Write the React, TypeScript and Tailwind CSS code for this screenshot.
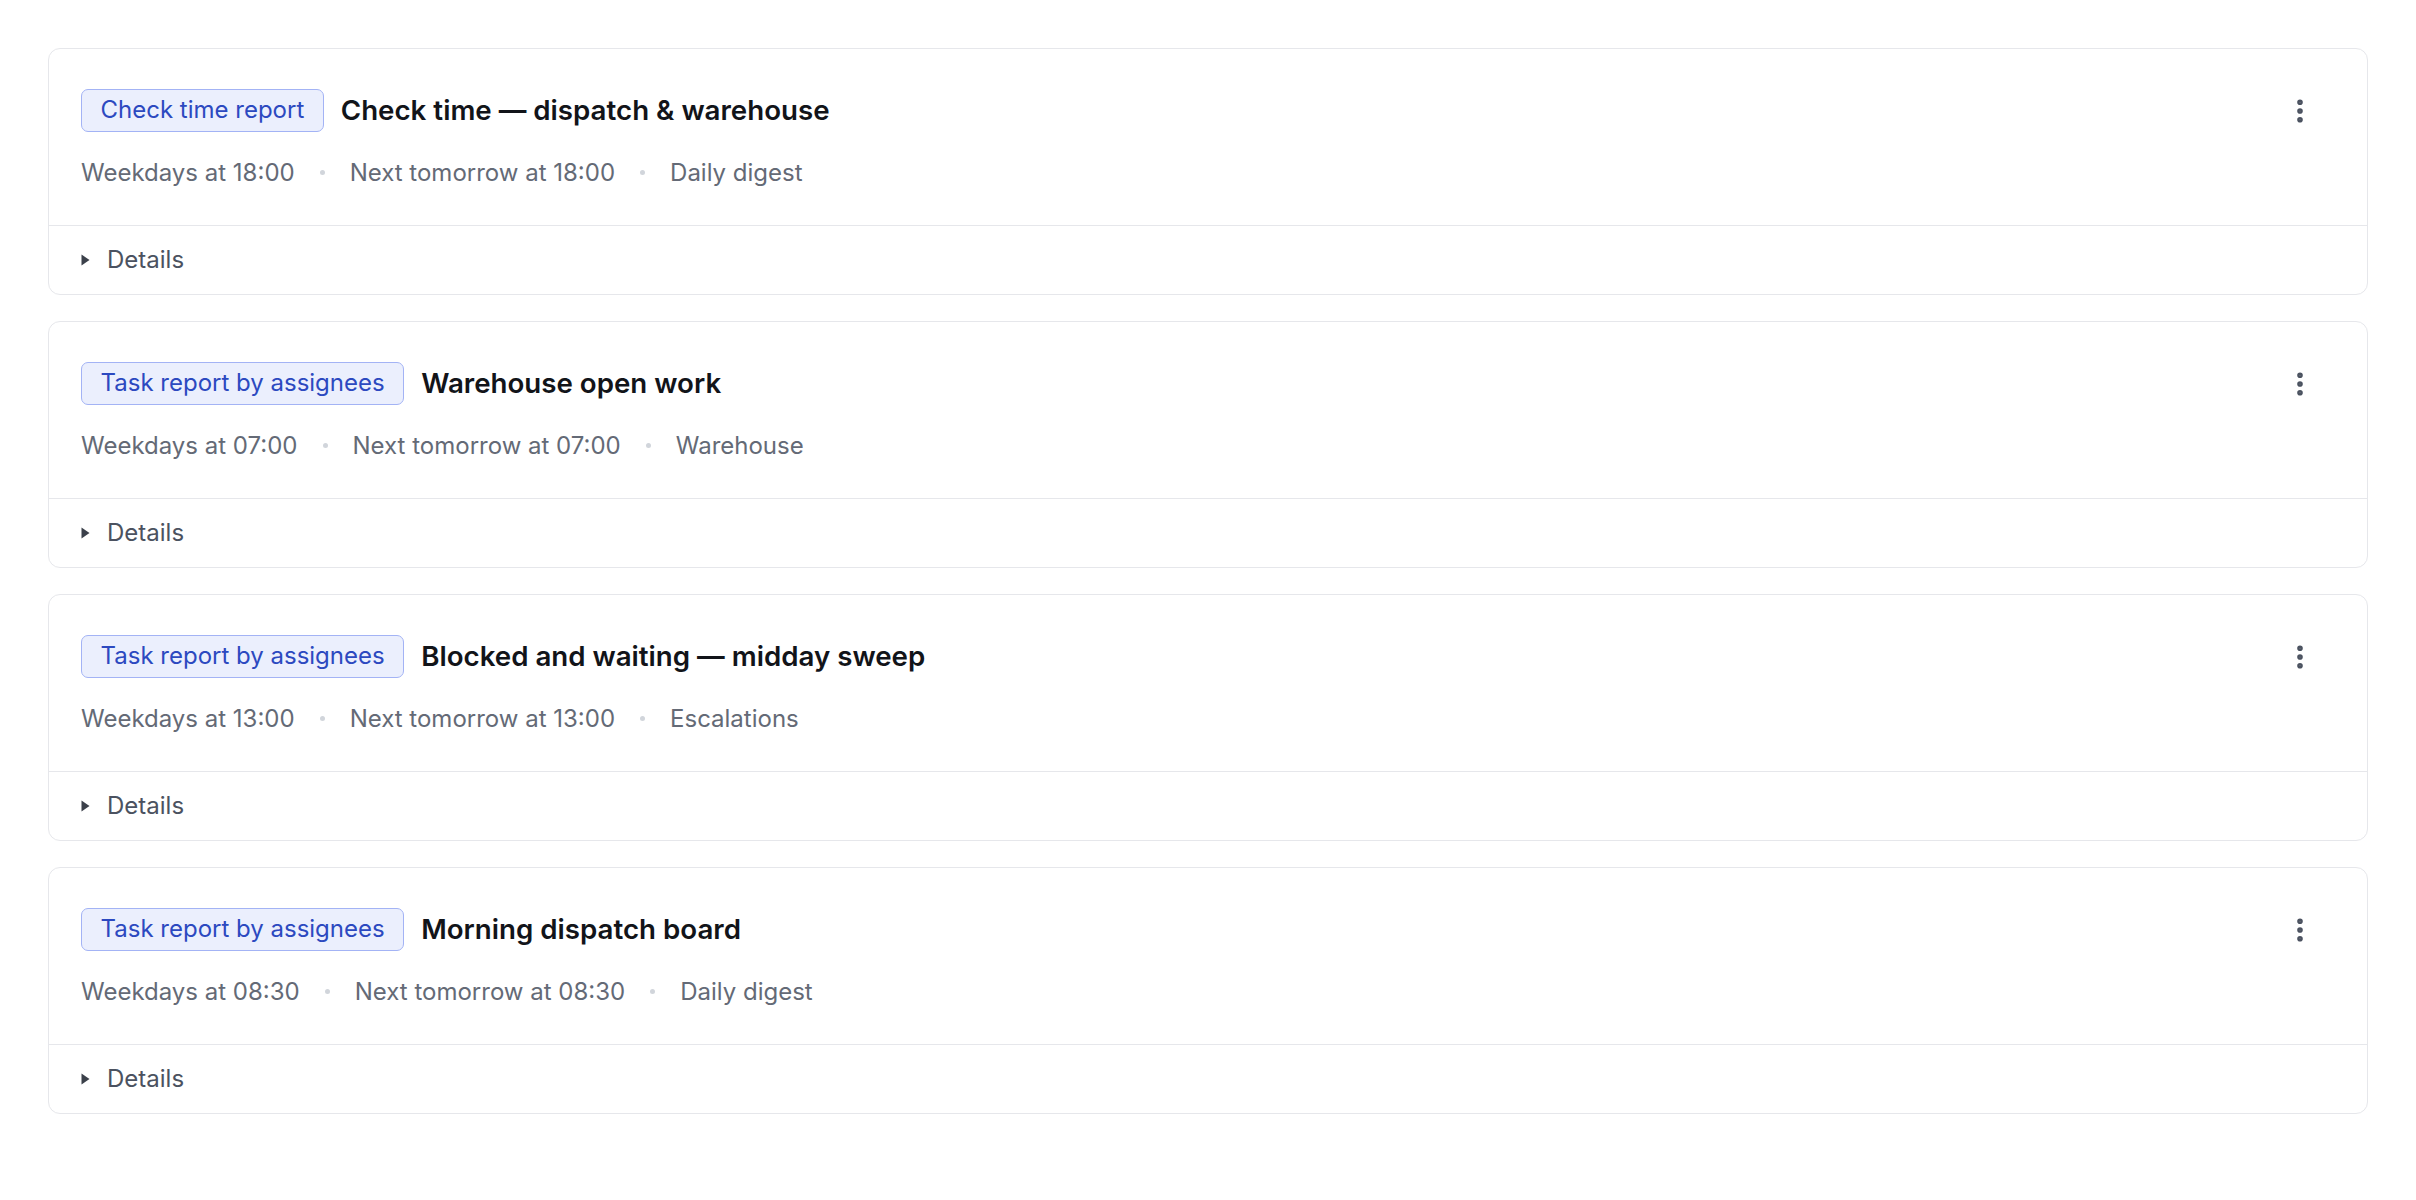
import React from "react";
import { EllipsisVertical } from "lucide-react";

interface Schedule {
  id: string;
  kind: string;
  title: string;
  cadence: string;
  next: string;
  channel: string;
}

const schedules: Schedule[] = [
  {
    id: "1",
    kind: "Check time report",
    title: "Check time — dispatch & warehouse",
    cadence: "Weekdays at 18:00",
    next: "Next tomorrow at 18:00",
    channel: "Daily digest",
  },
  {
    id: "2",
    kind: "Task report by assignees",
    title: "Warehouse open work",
    cadence: "Weekdays at 07:00",
    next: "Next tomorrow at 07:00",
    channel: "Warehouse",
  },
  {
    id: "3",
    kind: "Task report by assignees",
    title: "Blocked and waiting — midday sweep",
    cadence: "Weekdays at 13:00",
    next: "Next tomorrow at 13:00",
    channel: "Escalations",
  },
  {
    id: "4",
    kind: "Task report by assignees",
    title: "Morning dispatch board",
    cadence: "Weekdays at 08:30",
    next: "Next tomorrow at 08:30",
    channel: "Daily digest",
  },
];

const Dot = () => <span className="mx-[25px] h-[5px] w-[5px] rounded-full bg-[#d1d5db]" />;

const ScheduleCard: React.FC<{ item: Schedule }> = ({ item }) => {
  return (
    <div className="rounded-[12px] border border-[#e6e7eb] bg-white">
      {/* Header */}
      <div className="flex items-start justify-between pl-[32px] pr-[32px] pt-[39.5px] pb-[34px]">
        <div className="flex flex-col">
          <div className="flex items-center">
            <span className="flex h-[43px] items-center rounded-[7px] border border-[#a3b3f5] bg-[#ebeffd] px-[18.5px] text-[24px] leading-[36px] text-[#2c49c0]">
              {item.kind}
            </span>
            <h3 className="ml-[17px] text-[27.7px] font-semibold leading-[40px] text-[#121419]">
              {item.title}
            </h3>
          </div>
          <div className="mt-[23px] flex items-center text-[24px] leading-[36px] text-[#646a76]">
            <span>{item.cadence}</span>
            <Dot />
            <span>{item.next}</span>
            <Dot />
            <span>{item.channel}</span>
          </div>
        </div>
        <button className="mr-[13px] flex h-[44px] w-[44px] items-center justify-center rounded-md text-[#4b5260]">
          <EllipsisVertical size={30} strokeWidth={2.5} />
        </button>
      </div>

      {/* Details */}
      <div className="flex h-[69.5px] items-center border-t border-[#e6e7eb] pl-[32px]">
        <svg width="9" height="12" viewBox="0 0 9 12" className="text-[#3b404a]">
          <path d="M0.5 0.5 L8.5 6 L0.5 11.5 Z" fill="currentColor" />
        </svg>
        <span className="ml-[17px] text-[24px] leading-[36px] text-[#4b5260]">Details</span>
      </div>
    </div>
  );
};

export default function App() {
  return (
    <div
      className="min-h-screen bg-white p-[48px]"
      style={{ fontFamily: "Inter, 'Noto Sans', sans-serif" }}
    >
      <div className="flex flex-col gap-[26px]">
        {schedules.map((s) => (
          <ScheduleCard key={s.id} item={s} />
        ))}
      </div>
    </div>
  );
}
